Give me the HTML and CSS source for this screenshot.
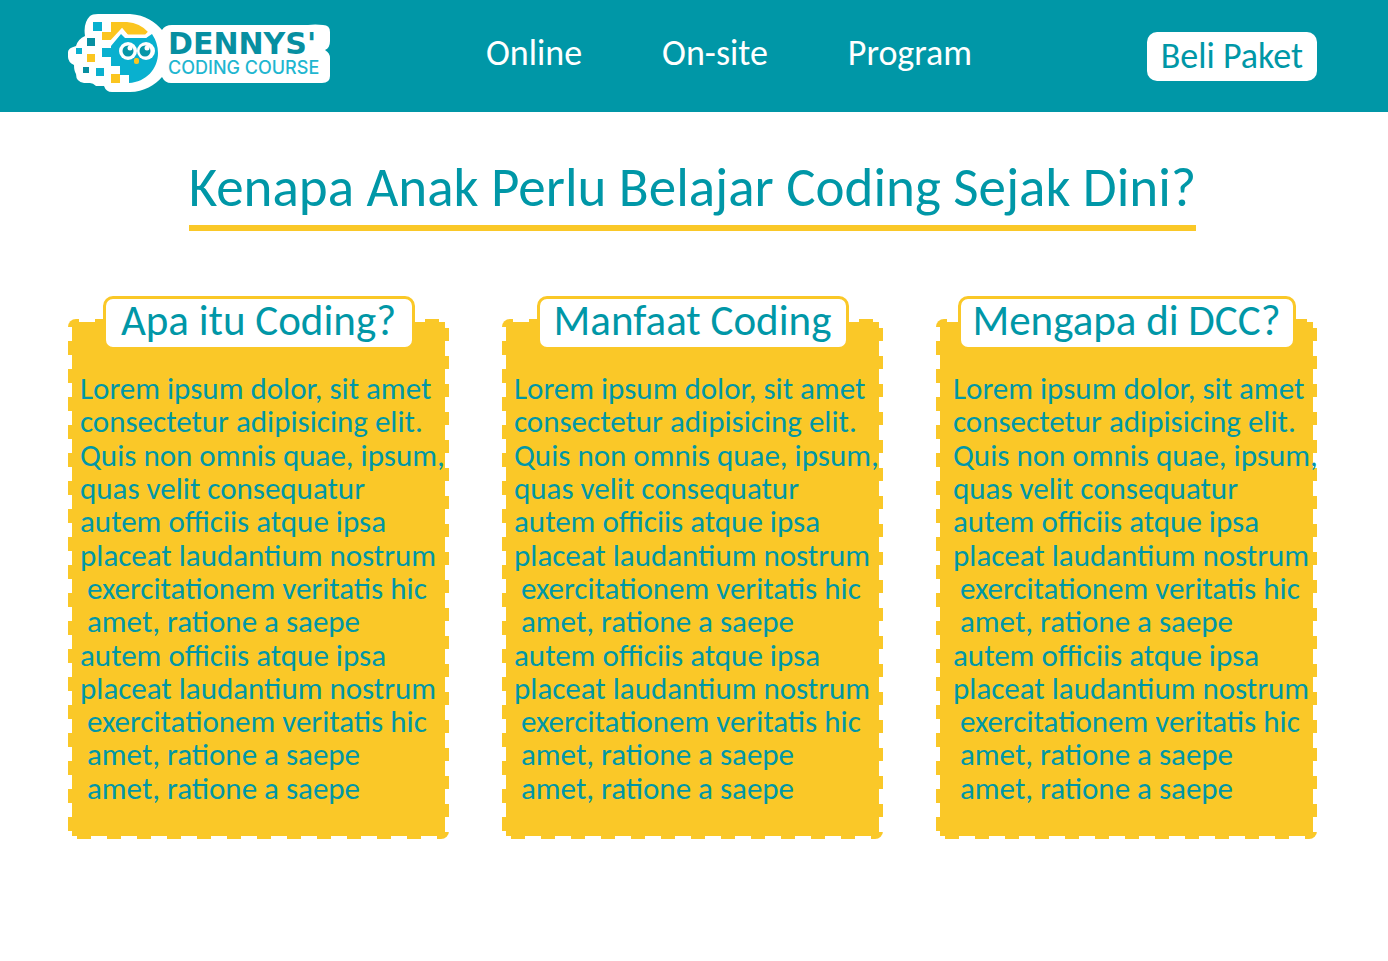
FILE: index.html
```html
<!DOCTYPE html>
<html lang="id">
<head>
<meta charset="utf-8">
<meta name="viewport" content="width=device-width, initial-scale=1">
<title>Dennys' Coding Course</title>
<link rel="stylesheet" href="styles.css">
</head>
<body>
<header class="header">
  <a class="logo" href="#" aria-label="Dennys' Coding Course">
    <svg class="logo-art" viewBox="0 0 262 78" width="262" height="78">
      <path fill="#fff" d="M22 2Q24 0 30 0H62C78 1 87 8 94 16Q97 11 104 11H240Q247 10 255 11Q262 11 262 18V27Q262 34 257 36Q262 39 262 44V62Q262 69 254 69H103Q97 69 94 63C87 71 76 78 62 78H44Q38 78 36 72H28Q25 69 22 69H16Q8 68 8 60Q6 57 6 51Q0 48 0 43V38Q0 34 8 32Q10 25 17 22Q15 9 22 2Z"/>
      <path fill="#fbc51f" d="M43 8H59Q72 9 80 18L77 21H60L54 15L43 28V26H34V18H43Z"/>
      <path fill="#09b0cf" d="M43 32L53 20L57 24H78L84 20Q90 29 90 39C90 55 78 68 61 69V61H52V52H43V43H34V34H43Z"/>
      <path fill="none" stroke="#fff" stroke-width="3" d="M42 29L54 16L59 22H78L82 18"/>
      <circle cx="60" cy="37" r="9" fill="#fff"/><circle cx="78" cy="37" r="9" fill="#fff"/>
      <circle cx="60" cy="37" r="5.5" fill="#0797a8"/><circle cx="77" cy="37" r="5.5" fill="#0797a8"/>
      <circle cx="62" cy="34" r="2.5" fill="#fff"/><circle cx="79" cy="34" r="2.5" fill="#fff"/>
      <rect x="66" y="44" width="5" height="6" rx="2" fill="#fbc51f"/>
      <path fill="#09b0cf" d="M25 8h9v9h-9zM8 34h6v6H8zM28 54h8v8h-8z"/>
      <path fill="#078fa1" d="M19 24h8v8h-8zM15 53h6v6h-6z"/>
      <path fill="#fbc51f" d="M19 40h8v8h-8zM43 60h9v9h-9z"/>
      <text class="logo-name" x="100" y="40">DENNYS'</text>
      <text class="logo-sub" x="100" y="60">CODING COURSE</text>
    </svg>
  </a>
  <nav class="nav">
    <a href="#">Online</a>
    <a href="#">On-site</a>
    <a href="#">Program</a>
  </nav>
  <button class="buy" type="button">Beli Paket</button>
</header>
<main class="main">
  <h1 class="title">Kenapa Anak Perlu Belajar Coding Sejak Dini?</h1>
  <div class="cards">
    <section class="card">
      <h2 class="card-title">Apa itu Coding?</h2>
      <p class="card-text">Lorem ipsum dolor, sit amet<br>consectetur adipisicing elit.<br>Quis non omnis quae, ipsum,<br>quas velit consequatur<br>autem officiis atque ipsa<br>placeat laudantium nostrum<br>&nbsp;exercitationem veritatis hic<br>&nbsp;amet, ratione a saepe<br>autem officiis atque ipsa<br>placeat laudantium nostrum<br>&nbsp;exercitationem veritatis hic<br>&nbsp;amet, ratione a saepe<br>&nbsp;amet, ratione a saepe</p>
    </section>
    <section class="card">
      <h2 class="card-title">Manfaat Coding</h2>
      <p class="card-text">Lorem ipsum dolor, sit amet<br>consectetur adipisicing elit.<br>Quis non omnis quae, ipsum,<br>quas velit consequatur<br>autem officiis atque ipsa<br>placeat laudantium nostrum<br>&nbsp;exercitationem veritatis hic<br>&nbsp;amet, ratione a saepe<br>autem officiis atque ipsa<br>placeat laudantium nostrum<br>&nbsp;exercitationem veritatis hic<br>&nbsp;amet, ratione a saepe<br>&nbsp;amet, ratione a saepe</p>
    </section>
    <section class="card card-wide">
      <h2 class="card-title">Mengapa di DCC?</h2>
      <p class="card-text">Lorem ipsum dolor, sit amet<br>consectetur adipisicing elit.<br>Quis non omnis quae, ipsum,<br>quas velit consequatur<br>autem officiis atque ipsa<br>placeat laudantium nostrum<br>&nbsp;exercitationem veritatis hic<br>&nbsp;amet, ratione a saepe<br>autem officiis atque ipsa<br>placeat laudantium nostrum<br>&nbsp;exercitationem veritatis hic<br>&nbsp;amet, ratione a saepe<br>&nbsp;amet, ratione a saepe</p>
    </section>
  </div>
</main>
</body>
</html>
```
FILE: styles.css
```css
:root {
  --teal: #0097a7;
  --yellow: #fac828;
}

* { box-sizing: border-box; }

body {
  margin: 0;
  background: #fff;
  color: var(--teal);
  font-family: Carlito, Calibri, Lato, sans-serif;
}

.header {
  display: flex;
  align-items: center;
  padding: 0 71px 0 68px;
  background: var(--teal);
}

.logo { padding: 14px 0 20px; }

.logo-art { display: block; }

.logo-name {
  font: 800 30px "DejaVu Sans", sans-serif;
  fill: #078fa1;
}

.logo-sub {
  font: 500 18px Inter, sans-serif;
  fill: #1fb6d0;
}

.nav {
  display: flex;
  gap: 80px;
  margin: 0 auto 0 156px;
  padding-bottom: 6px;
}

.nav a {
  color: #fff;
  font-size: 36px;
  line-height: 40px;
  text-decoration: none;
}

.buy {
  padding: 4px 14px 5px;
  border: 0;
  border-radius: 10px;
  background: #fff;
  color: var(--teal);
  font: inherit;
  font-size: 36px;
  line-height: 40px;
}

.main { padding: 45px 71px 122px 68px; }

.title {
  width: fit-content;
  margin: 0 auto 65px;
  padding-bottom: 6px;
  border-bottom: 6px solid var(--yellow);
  font-size: 55px;
  font-weight: 400;
  line-height: 62px;
  white-space: nowrap;
}

.cards {
  display: grid;
  grid-template-columns: repeat(3, 1fr);
  gap: 53px;
}

.card {
  display: flex;
  flex-direction: column;
  align-items: center;
  min-width: 0;
  margin-top: 23px;
  padding-bottom: 34px;
  border-radius: 8px;
  background:
    linear-gradient(var(--yellow), var(--yellow)) center / calc(100% - 8px) calc(100% - 6px) no-repeat,
    linear-gradient(transparent 14px, var(--yellow) 14px) 0 8px / 4px 28px repeat-y,
    linear-gradient(transparent 15px, var(--yellow) 15px) 100% -6px / 4px 28px repeat-y,
    linear-gradient(90deg, transparent 16px, var(--yellow) 16px) 11px 0 / 30px 3px repeat-x,
    linear-gradient(90deg, var(--yellow) 14px, transparent 14px) 9px 100% / 30px 3px repeat-x;
}

.card-title {
  width: 312px;
  margin: -23px 0 0;
  padding-bottom: 4px;
  border: 3px solid var(--yellow);
  border-radius: 10px;
  background: #fff;
  font-size: 43px;
  font-weight: 400;
  line-height: 44px;
  text-align: center;
  white-space: nowrap;
}

.card-wide .card-title { width: 338px; }

.card-text {
  align-self: stretch;
  margin: 0;
  padding: 22px 0 0 12px;
  font-size: 31px;
  line-height: 1.075;
  white-space: nowrap;
}

.card-wide .card-text { padding-left: 17px; }
```
